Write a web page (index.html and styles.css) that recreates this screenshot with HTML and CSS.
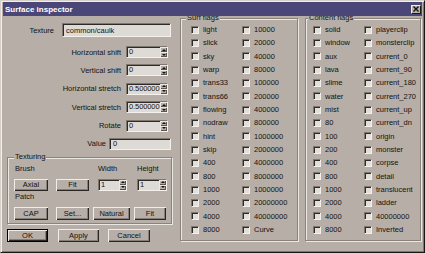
FILE: index.html
```html
<!DOCTYPE html>
<html lang="en">
<head>
    <link rel="stylesheet" href="styles.css">
</head>
<body>
<div class="window">
    <div class="titlebar">
        <span class="title">Surface inspector</span>
        <span class="close"><svg width="6" height="6" viewBox="0 0 6 6"><path d="M0.5 0.5L5.5 5.5M5.5 0.5L0.5 5.5" stroke="#111" stroke-width="1.4"/></svg></span>
    </div>
    <div class="main">
        <div class="left">
            <div class="row row-texture"><span>Texture</span><div class="field tex-field">common/caulk</div></div>
            <div class="row spin-row first"><span>Horizontal shift</span><div class="spin w42"><span class="val">0</span><span class="arrows"><i class="up"></i><i class="dn"></i></span></div></div>
            <div class="row spin-row"><span>Vertical shift</span><div class="spin w42"><span class="val">0</span><span class="arrows"><i class="up"></i><i class="dn"></i></span></div></div>
            <div class="row spin-row"><span>Horizontal stretch</span><div class="spin w42"><span class="val">0.500000</span><span class="arrows"><i class="up"></i><i class="dn"></i></span></div></div>
            <div class="row spin-row"><span>Vertical stretch</span><div class="spin w42"><span class="val">0.500000</span><span class="arrows"><i class="up"></i><i class="dn"></i></span></div></div>
            <div class="row spin-row"><span>Rotate</span><div class="spin w42"><span class="val">0</span><span class="arrows"><i class="up"></i><i class="dn"></i></span></div></div>
            <div class="row value-row"><span>Value</span><div class="field value-field">0</div></div>

            <div class="group tex-group">
                <div class="group-title">Texturing</div>
                <div class="brush-grid">
                    <span>Brush</span><span></span><span>Width</span><span>Height</span>
                    <button class="btn w34">Axial</button>
                    <button class="btn w33">Fit</button>
                    <div class="spin w29"><span class="val">1</span><span class="arrows"><i class="up"></i><i class="dn"></i></span></div>
                    <div class="spin w30"><span class="val">1</span><span class="arrows"><i class="up"></i><i class="dn"></i></span></div>
                </div>
                <div class="patch-lbl">Patch</div>
                <div class="patch-row">
                    <button class="btn w34">CAP</button>
                    <button class="btn w33 ml8">Set...</button>
                    <button class="btn w37 ml4">Natural</button>
                    <button class="btn w32 ml4">Fit</button>
                </div>
            </div>

            <div class="dlg-buttons">
                <button class="btn default w41">OK</button>
                <button class="btn w41 ml10">Apply</button>
                <button class="btn w42 ml9">Cancel</button>
            </div>
        </div>

        <div class="group surf">
            <div class="group-title">Surf flags</div>
            <div class="flags">
                <div class="flag"><i class="cb"></i>light</div><div class="flag"><i class="cb"></i>10000</div>
                <div class="flag"><i class="cb"></i>slick</div><div class="flag"><i class="cb"></i>20000</div>
                <div class="flag"><i class="cb"></i>sky</div><div class="flag"><i class="cb"></i>40000</div>
                <div class="flag"><i class="cb"></i>warp</div><div class="flag"><i class="cb"></i>80000</div>
                <div class="flag"><i class="cb"></i>trans33</div><div class="flag"><i class="cb"></i>100000</div>
                <div class="flag"><i class="cb"></i>trans66</div><div class="flag"><i class="cb"></i>200000</div>
                <div class="flag"><i class="cb"></i>flowing</div><div class="flag"><i class="cb"></i>400000</div>
                <div class="flag"><i class="cb"></i>nodraw</div><div class="flag"><i class="cb"></i>800000</div>
                <div class="flag"><i class="cb"></i>hint</div><div class="flag"><i class="cb"></i>1000000</div>
                <div class="flag"><i class="cb"></i>skip</div><div class="flag"><i class="cb"></i>2000000</div>
                <div class="flag"><i class="cb"></i>400</div><div class="flag"><i class="cb"></i>4000000</div>
                <div class="flag"><i class="cb"></i>800</div><div class="flag"><i class="cb"></i>8000000</div>
                <div class="flag"><i class="cb"></i>1000</div><div class="flag"><i class="cb"></i>1000000</div>
                <div class="flag"><i class="cb"></i>2000</div><div class="flag"><i class="cb"></i>20000000</div>
                <div class="flag"><i class="cb"></i>4000</div><div class="flag"><i class="cb"></i>40000000</div>
                <div class="flag"><i class="cb"></i>8000</div><div class="flag"><i class="cb"></i>Curve</div>
            </div>
        </div>

        <div class="group contents">
            <div class="group-title">Content flags</div>
            <div class="flags">
                <div class="flag"><i class="cb"></i>solid</div><div class="flag"><i class="cb"></i>playerclip</div>
                <div class="flag"><i class="cb"></i>window</div><div class="flag"><i class="cb"></i>monsterclip</div>
                <div class="flag"><i class="cb"></i>aux</div><div class="flag"><i class="cb"></i>current_0</div>
                <div class="flag"><i class="cb"></i>lava</div><div class="flag"><i class="cb"></i>current_90</div>
                <div class="flag"><i class="cb"></i>slime</div><div class="flag"><i class="cb"></i>current_180</div>
                <div class="flag"><i class="cb"></i>water</div><div class="flag"><i class="cb"></i>current_270</div>
                <div class="flag"><i class="cb"></i>mist</div><div class="flag"><i class="cb"></i>current_up</div>
                <div class="flag"><i class="cb"></i>80</div><div class="flag"><i class="cb"></i>current_dn</div>
                <div class="flag"><i class="cb"></i>100</div><div class="flag"><i class="cb"></i>origin</div>
                <div class="flag"><i class="cb"></i>200</div><div class="flag"><i class="cb"></i>monster</div>
                <div class="flag"><i class="cb"></i>400</div><div class="flag"><i class="cb"></i>corpse</div>
                <div class="flag"><i class="cb"></i>800</div><div class="flag"><i class="cb"></i>detail</div>
                <div class="flag"><i class="cb"></i>1000</div><div class="flag"><i class="cb"></i>translucent</div>
                <div class="flag"><i class="cb"></i>2000</div><div class="flag"><i class="cb"></i>ladder</div>
                <div class="flag"><i class="cb"></i>4000</div><div class="flag"><i class="cb"></i>40000000</div>
                <div class="flag"><i class="cb"></i>8000</div><div class="flag"><i class="cb"></i>Inverted</div>
            </div>
        </div>
    </div>
</div>
</body>
</html>
```
FILE: styles.css
```css
*
{
    box-sizing: border-box;
}
body
{
    margin: 0;
    background: #b6aea7;
    font-family: "Liberation Sans", Arial, sans-serif;
    font-size: 7.5px;
    color: #141210;
}
.window
{
    width: 425px;
    height: 253px;
    border: 1px solid;
    border-color: #d6d0ca #1a1816 #1a1816 #d6d0ca;
    box-shadow: inset 1px 1px 0 #f2eee9, inset -1px -1px 0 #7e7770;
    padding: 1px 2px 2px;
    background: #b6aea7;
}
.titlebar
{
    position: relative;
    height: 14px;
    background: #4a4778;
    display: flex;
    align-items: center;
    justify-content: space-between;
    padding: 0 1px 0 2px;
}
.title
{
    color: #fff;
    font-weight: bold;
    font-size: 8px;
}
.close
{
    width: 10px;
    height: 9px;
    background: #b6aea7;
    border: 1px solid;
    border-color: #f0ece8 #1c1a18 #1c1a18 #f0ece8;
    display: flex;
    align-items: center;
    justify-content: center;
}
.main
{
    display: flex;
    align-items: flex-start;
}
.left
{
    width: 169px;
}
.row
{
    display: flex;
    justify-content: flex-end;
    align-items: center;
}
.row-texture
{
    margin-top: 7px;
    height: 14px;
    gap: 8px;
    padding-right: 1px;
}
.field
{
    background: #dedad5;
    border: 1px solid;
    border-color: #7e7770 #f4f0ec #f4f0ec #7e7770;
    box-shadow: inset 1px 1px 0 #2e2a27;
    padding-left: 3px;
    display: flex;
    align-items: center;
}
.tex-field
{
    width: 109px;
    height: 14px;
}
.spin-row
{
    height: 12px;
    gap: 5px;
    padding-right: 4px;
    margin-top: 6.4px;
}
.spin-row.first
{
    margin-top: 9px;
}
.value-row
{
    height: 12px;
    gap: 3px;
    padding-right: 1px;
    margin-top: 6.4px;
}
.value-field
{
    width: 62px;
    height: 12px;
}
.spin
{
    display: flex;
    height: 12px;
    background: #dedad5;
    border: 1px solid;
    border-color: #7e7770 #f4f0ec #f4f0ec #7e7770;
    box-shadow: inset 1px 1px 0 #2e2a27;
}
.spin .val
{
    flex: 1;
    padding-left: 2px;
    line-height: 10px;
    white-space: nowrap;
    letter-spacing: -0.1px;
}
.arrows
{
    width: 7px;
    flex: none;
    display: flex;
    flex-direction: column;
}
.arrows i
{
    flex: 1;
    background: #b6aea7;
    box-shadow: inset 1px 1px 0 #ece8e4, inset -1px -1px 0 #5a5550;
    display: flex;
    align-items: center;
    justify-content: center;
}
.arrows i::after
{
    content: '';
    border-left: 2px solid transparent;
    border-right: 2px solid transparent;
}
.arrows .up::after
{
    border-bottom: 2px solid #141210;
}
.arrows .dn::after
{
    border-top: 2px solid #141210;
}
.group
{
    border: 1px solid #8a837c;
    box-shadow: inset 1px 1px 0 #ebe7e3, 1px 1px 0 #ebe7e3;
}
.group-title
{
    width: max-content;
    margin-top: -6px;
    line-height: 10px;
    padding: 0 1px;
    background: #b6aea7;
}
.tex-group
{
    margin: 7px 0 0 4px;
    width: 165px;
    padding: 0 5px 3px 6px;
}
.brush-grid
{
    display: grid;
    grid-template-columns: 42px 41px 39px 30px;
    grid-template-rows: 10px 12px;
    row-gap: 5px;
    margin-top: 2px;
    align-items: center;
    padding-left: 1px;
}
.brush-grid span
{
    line-height: 10px;
}
.brush-grid .btn, .brush-grid .spin
{
    height: 12px;
}
.brush-grid .btn
{
    margin-left: -1px;
}
.patch-lbl
{
    height: 10px;
    line-height: 10px;
    margin-top: 1px;
    padding-left: 1px;
}
.patch-row
{
    display: flex;
    margin-top: 5px;
    height: 13px;
}
.btn
{
    border: none;
    background: #b6aea7;
    box-shadow: inset 1px 1px 0 #f0ece8, inset -1px -1px 0 #2a2624, inset -2px -2px 0 #857f79;
    font: inherit;
    color: inherit;
    padding: 0;
    height: 13px;
}
.btn.default
{
    border: 1px solid #000;
}
.dlg-buttons
{
    display: flex;
    margin: 5px 0 0 4px;
}
.w29 { width: 29px; }
.w30 { width: 30px; }
.w32 { width: 32px; }
.w33 { width: 33px; }
.w34 { width: 34px; }
.w37 { width: 37px; }
.w41 { width: 41px; }
.w42 { width: 42px; }
.ml4 { margin-left: 4px; }
.ml8 { margin-left: 8px; }
.ml9 { margin-left: 9px; }
.ml10 { margin-left: 10px; }
.surf
{
    margin: 2px 0 0 8px;
    width: 118px;
    height: 223px;
    padding-left: 10px;
}
.contents
{
    margin: 2px 0 0 7px;
    width: 116px;
    height: 223px;
    padding-left: 7px;
}
.surf .group-title, .contents .group-title
{
    margin-left: -5px;
}
.flags
{
    display: grid;
    grid-template-columns: 51px 1fr;
    grid-auto-rows: 13.33px;
    align-items: center;
}
.flag
{
    display: flex;
    align-items: center;
    gap: 4px;
    white-space: nowrap;
}
.cb
{
    width: 8px;
    height: 8px;
    background: #e2ded9;
    border: 1px solid;
    border-color: #7e7770 #f4f0ec #f4f0ec #7e7770;
    box-shadow: inset 1px 1px 0 #2e2a27;
}
```
